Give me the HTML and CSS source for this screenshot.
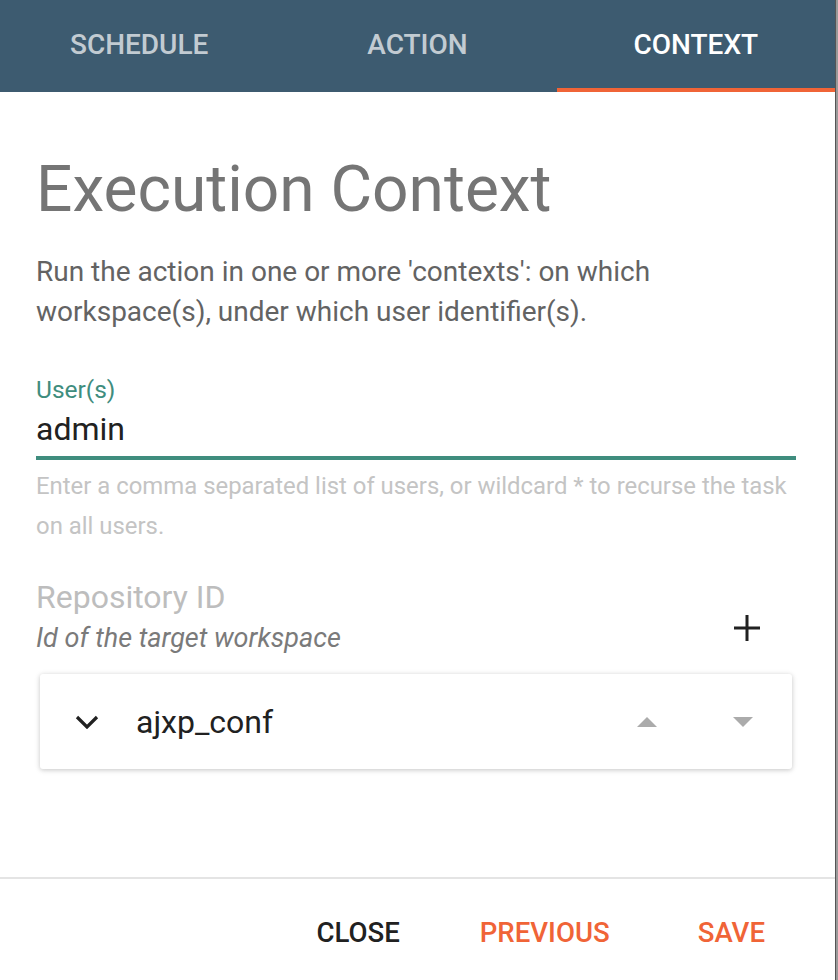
FILE: index.html
```html
<!DOCTYPE html>
<html lang="en">
<head>
<meta charset="utf-8">
<title>Execution Context</title>
<link rel="stylesheet" href="styles.css">
</head>
<body>
<div class="dialog">
  <nav class="tabs">
    <div class="tab">SCHEDULE</div>
    <div class="tab">ACTION</div>
    <div class="tab active">CONTEXT</div>
  </nav>
  <main class="content">
    <h1 class="title">Execution Context</h1>
    <p class="desc">Run the action in one or more 'contexts': on which workspace(s), under which user identifier(s).</p>
    <div class="field">
      <div class="field-label">User(s)</div>
      <div class="field-input">admin</div>
      <div class="field-help">Enter a comma separated list of users, or wildcard * to recurse the task on all users.</div>
    </div>
    <div class="repo-head">
      <div class="repo-text">
        <div class="repo-label">Repository ID</div>
        <div class="repo-hint">Id of the target workspace</div>
      </div>
      <svg class="plus" width="28" height="28" viewBox="0 0 28 28"><path d="M14 1v26M1 14h26" stroke="#212121" stroke-width="3" fill="none"/></svg>
    </div>
    <div class="card">
      <svg class="chevron" width="24" height="14" viewBox="0 0 24 14"><path d="M2 2l10 10 10-10" stroke="#212121" stroke-width="3.2" fill="none"/></svg>
      <span class="card-value">ajxp_conf</span>
      <span class="arrows">
        <svg class="tri" width="20" height="10" viewBox="0 0 20 10"><path d="M10 0L20 10H0z" fill="#ababab"/></svg>
        <svg class="tri" width="20" height="10" viewBox="0 0 20 10"><path d="M0 0H20L10 10z" fill="#ababab"/></svg>
      </span>
    </div>
  </main>
  <footer class="actions">
    <button class="btn btn-close">CLOSE</button>
    <button class="btn btn-accent">PREVIOUS</button>
    <button class="btn btn-accent btn-save">SAVE</button>
  </footer>
</div>
</body>
</html>
```

FILE: styles.css
```css
html, body {
  margin: 0;
  padding: 0;
  background: #9a9a9a;
}
body {
  font-family: Roboto, "Noto Sans", sans-serif;
}
.dialog {
  width: 835px;
  height: 980px;
  background: #fff;
  border-right: 1px solid #555;
  display: flex;
  flex-direction: column;
}
.tabs {
  display: grid;
  grid-template-columns: 1fr 1fr 1fr;
  height: 92px;
  background: #3d5b70;
}
.tab {
  display: flex;
  align-items: center;
  justify-content: center;
  font-size: 28px;
  font-weight: 500;
  color: rgba(255, 255, 255, 0.7);
  border-bottom: 4px solid transparent;
}
.tab.active {
  color: #fff;
  border-bottom-color: #f06437;
}
.content {
  flex: 1;
  padding: 58px 39px 0 36px;
}
.title {
  margin: 0;
  font-size: 64px;
  line-height: 80px;
  font-weight: 400;
  color: #757575;
}
.desc {
  margin: 22px 0 0;
  font-size: 28px;
  line-height: 40px;
  color: #636363;
}
.field {
  margin-top: 43px;
}
.field-label {
  font-size: 24.5px;
  line-height: 30px;
  color: #3f8d7e;
}
.field-input {
  margin-top: 4px;
  font-size: 32px;
  line-height: 40px;
  color: #212121;
  padding-bottom: 7px;
  border-bottom: 4px solid #3f8d7e;
}
.field-help {
  margin-top: 6px;
  font-size: 23.9px;
  line-height: 40px;
  color: #c4c4c4;
}
.repo-head {
  margin-top: 31px;
  display: flex;
  justify-content: space-between;
  align-items: flex-start;
}
.repo-label {
  font-size: 32px;
  line-height: 40px;
  color: #bdbdbd;
}
.repo-hint {
  margin-top: 3px;
  font-size: 27px;
  line-height: 36px;
  font-style: italic;
  color: #7a7a7a;
}
.plus {
  margin-top: 37px;
  margin-right: 35px;
}
.card {
  margin: 18px 4px 0;
  height: 95px;
  display: flex;
  align-items: center;
  background: #fff;
  border-radius: 3px;
  box-shadow: 0 1px 6px rgba(0, 0, 0, 0.12), 0 1px 4px rgba(0, 0, 0, 0.12);
}
.chevron {
  margin-left: 35px;
}
.card-value {
  margin-left: 37px;
  font-size: 32px;
  color: #212121;
  flex: 1;
}
.arrows {
  display: flex;
  gap: 76px;
  margin-right: 39px;
}
.actions {
  border-top: 2px solid #e4e4e4;
  height: 103px;
  display: flex;
  justify-content: flex-end;
  align-items: flex-start;
  padding-right: 30px;
  box-sizing: border-box;
}
.btn {
  margin-top: 36px;
  padding: 0 40px;
  border: 0;
  background: none;
  font-family: Roboto, "Noto Sans", sans-serif;
  font-size: 27.6px;
  font-weight: 500;
  line-height: 36px;
}
.btn-close {
  color: #212121;
}
.btn-accent {
  color: #f06437;
}
.btn-save {
  padding-left: 48px;
}
```
